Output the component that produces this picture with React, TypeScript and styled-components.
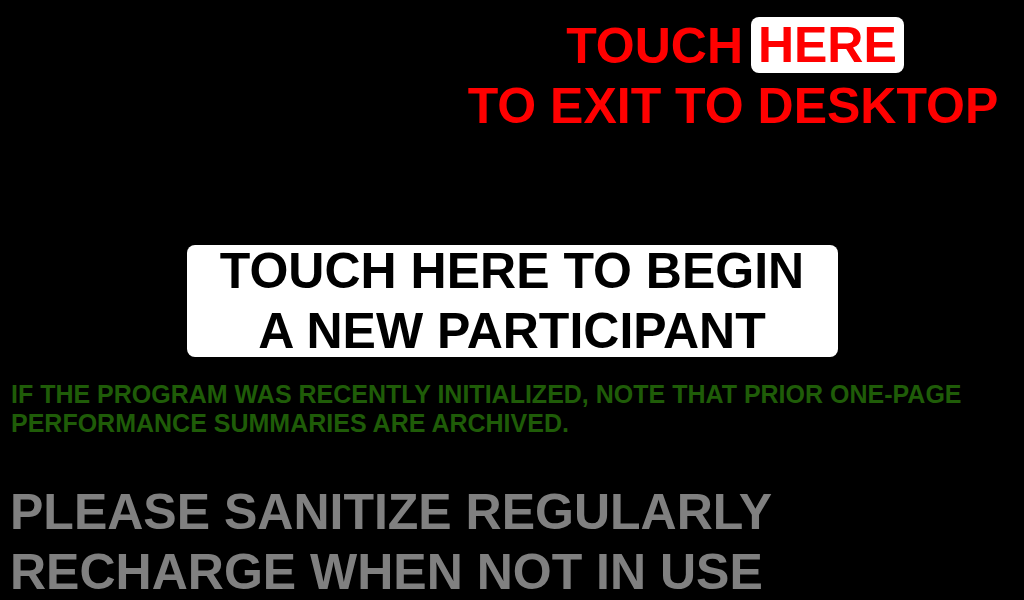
import React from "react";
import styled, { createGlobalStyle } from "styled-components";

const Global = createGlobalStyle`
  html, body {
    margin: 0;
    padding: 0;
    background: #000;
    overflow: hidden;
  }
  body {
    font-family: "Liberation Sans", Arial, sans-serif;
    font-weight: 700;
  }
`;

const Screen = styled.div`
  width: 1024px;
  height: 600px;
  background: #000;
  display: flex;
  flex-direction: column;
  overflow: hidden;
  padding-top: 16px;
  box-sizing: border-box;
`;

const ExitBlock = styled.div`
  padding-left: 442px;
  text-align: center;
  color: #ff0000;
  font-size: 50px;
  line-height: 60px;
  white-space: nowrap;
  cursor: pointer;
`;

const ExitLine = styled.div<{ $shift?: number }>`
  padding-left: ${(p) => p.$shift ?? 0}px;
`;

const HereTag = styled.span`
  display: inline-block;
  background: #fff;
  color: #ff0000;
  border-radius: 8px;
  padding: 0 7px;
  height: 56px;
  line-height: 56px;
  margin-left: -6px;
  vertical-align: top;
  margin-top: 1px;
`;

const BeginButton = styled.button`
  align-self: center;
  margin-top: 109px;
  width: 651px;
  height: 112px;
  background: #fff;
  border: none;
  border-radius: 8px;
  padding: 0;
  display: flex;
  flex-direction: column;
  align-items: center;
  justify-content: center;
  font-family: "Liberation Sans", Arial, sans-serif;
  font-weight: 700;
  font-size: 50px;
  line-height: 60px;
  color: #000;
  cursor: pointer;
  white-space: nowrap;
`;

const Note = styled.p`
  margin: 23px 0 0 11px;
  color: #1f5c08;
  font-size: 25px;
  line-height: 29px;
  white-space: nowrap;
`;

const Reminder = styled.div`
  margin: 48px 0 0 10px;
  display: flex;
  flex-direction: column;
  gap: 8px;
  color: #808080;
  font-size: 50px;
  line-height: 52px;
  white-space: nowrap;
`;

export default function App() {
  return (
    <>
      <Global />
      <Screen>
        <ExitBlock>
          <ExitLine $shift={4}>
            TOUCH <HereTag>HERE</HereTag>
          </ExitLine>
          <ExitLine>TO EXIT TO DESKTOP</ExitLine>
        </ExitBlock>
        <BeginButton>
          <span>TOUCH HERE TO BEGIN</span>
          <span>A NEW PARTICIPANT</span>
        </BeginButton>
        <Note>
          IF THE PROGRAM WAS RECENTLY INITIALIZED, NOTE THAT PRIOR ONE-PAGE
          <br />
          PERFORMANCE SUMMARIES ARE ARCHIVED.
        </Note>
        <Reminder>
          <span>PLEASE SANITIZE REGULARLY</span>
          <span>RECHARGE WHEN NOT IN USE</span>
        </Reminder>
      </Screen>
    </>
  );
}
